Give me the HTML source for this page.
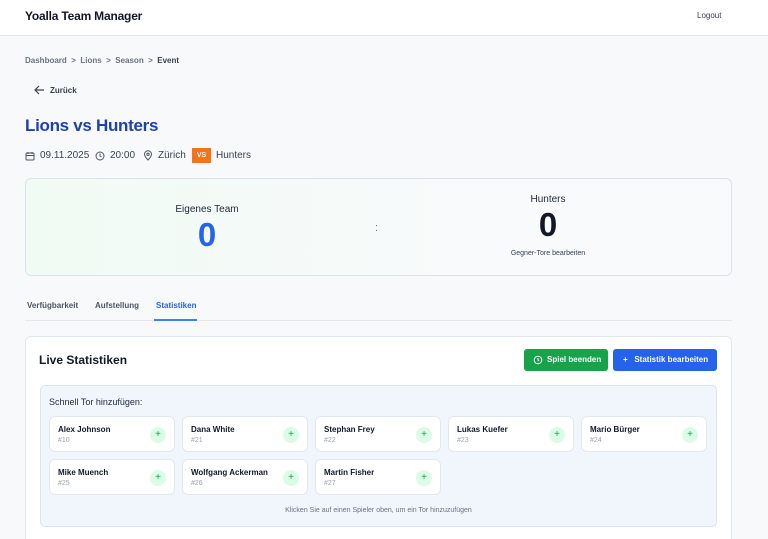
<!DOCTYPE html><html><head><style>
*{box-sizing:border-box;margin:0;padding:0}
html,body{width:768px;height:539px;overflow:hidden}
body{background:#f8f9fb;font-family:"Liberation Sans",sans-serif;color:#111827;position:relative}
.a{position:absolute}
.hdr{left:0;top:0;width:768px;height:36px;background:#fff;border-bottom:1px solid #e5e7eb}
.pc{background:#fff;border:1px solid #e2e8f0;border-radius:6px;width:126px;height:36px}
.pc b{position:absolute;left:8px;top:8px;font-size:8px}
.pc span{position:absolute;left:8px;top:20px;font-size:7px;color:#9ca3af}
.pc i{position:absolute;right:8px;top:10px;width:16px;height:16px;border-radius:50%;background:#dcfce7;color:#16a34a;font-style:normal;font-size:10px;text-align:center;line-height:16px}
</style></head><body>
<div class="a hdr"></div>
<div class="a" style="left:25px;top:9px;font-size:12px;font-weight:bold;letter-spacing:-0.2px">Yoalla Team Manager</div>
<div class="a" style="left:697px;top:11px;font-size:8px;color:#374151">Logout</div>
<div class="a" style="left:25px;top:56px;font-size:8px;color:#6b7280;font-weight:bold">Dashboard &nbsp;&gt;&nbsp; Lions &nbsp;&gt;&nbsp; Season &nbsp;&gt;&nbsp; <span style="color:#374151">Event</span></div>
<svg class="a" style="left:34px;top:85px" width="11" height="10" viewBox="0 0 11 10"><path d="M10 5H1M5 1L1 5l4 4" stroke="#374151" stroke-width="1.2" fill="none"/></svg>
<div class="a" style="left:50px;top:86px;font-size:8px;color:#374151;font-weight:bold">Zurück</div>
<div class="a" style="left:25px;top:116px;font-size:17px;font-weight:bold;color:#1e40af;letter-spacing:-0.3px">Lions vs Hunters</div>
<svg class="a" style="left:25px;top:151px" width="10" height="10" viewBox="0 0 10 10"><rect x="1" y="2" width="8" height="7" rx="1" stroke="#4b5563" fill="none"/><path d="M1 4.5h8M3 1v2M7 1v2" stroke="#4b5563"/></svg>
<div class="a" style="left:40px;top:150px;font-size:10px;color:#374151">09.11.2025</div>
<svg class="a" style="left:95px;top:151px" width="10" height="10" viewBox="0 0 10 10"><circle cx="5" cy="5" r="4" stroke="#4b5563" fill="none"/><path d="M5 2.5V5l1.5 1" stroke="#4b5563" fill="none"/></svg>
<div class="a" style="left:110px;top:150px;font-size:10px;color:#374151">20:00</div>
<svg class="a" style="left:143px;top:150px" width="10" height="11" viewBox="0 0 10 11"><path d="M5 10S1.5 6.5 1.5 4.3a3.5 3.5 0 017 0C8.5 6.5 5 10 5 10z" stroke="#4b5563" fill="none"/><circle cx="5" cy="4.3" r="1.2" stroke="#4b5563" fill="none"/></svg>
<div class="a" style="left:158px;top:150px;font-size:10px;color:#374151">Zürich</div>
<div class="a" style="left:192px;top:148px;width:19px;height:15px;background:#f97316;color:#fff;font-size:7px;font-weight:bold;text-align:center;line-height:15px">VS</div>
<div class="a" style="left:216px;top:150px;font-size:10px;color:#374151">Hunters</div>
<div class="a" style="left:25px;top:178px;width:707px;height:98px;border:1px solid #dbe3ea;border-radius:6px;background:linear-gradient(90deg,#f0fbf3,#f8fafb 60%,#f9fafb)"></div>
<div class="a" style="left:140px;top:204px;width:134px;text-align:center;font-size:10px;color:#1f2937">Eigenes Team</div>
<div class="a" style="left:140px;top:216px;width:134px;text-align:center;font-size:33px;font-weight:bold;color:#2563eb">0</div>
<div class="a" style="left:375px;top:222px;font-size:11px;color:#6b7280">:</div>
<div class="a" style="left:480px;top:194px;width:136px;text-align:center;font-size:10px;color:#1f2937">Hunters</div>
<div class="a" style="left:480px;top:206px;width:136px;text-align:center;font-size:33px;font-weight:bold;color:#111827">0</div>
<div class="a" style="left:480px;top:250px;width:136px;text-align:center;font-size:7px;color:#374151">Gegner-Tore bearbeiten</div>
<div class="a" style="left:25px;top:320px;width:707px;height:1px;background:#e5e7eb"></div>
<div class="a" style="left:27px;top:301px;font-size:8px;color:#4b5563;font-weight:bold">Verfügbarkeit</div>
<div class="a" style="left:95px;top:301px;font-size:8px;color:#4b5563;font-weight:bold">Aufstellung</div>
<div class="a" style="left:156px;top:301px;font-size:8px;color:#2563eb;font-weight:bold">Statistiken</div>
<div class="a" style="left:154px;top:319px;width:43px;height:2px;background:#3b82f6"></div>
<div class="a" style="left:25px;top:336px;width:707px;height:220px;background:#fff;border:1px solid #e2e8f0;border-radius:6px"></div>
<div class="a" style="left:39px;top:353px;font-size:12px;font-weight:bold">Live Statistiken</div>
<div class="a" style="left:524px;top:349px;width:84px;height:22px;background:#16a34a;border-radius:3px;color:#fff;font-size:8px;font-weight:bold;line-height:22px;padding-left:23px">Spiel beenden</div>
<svg class="a" style="left:533px;top:355px" width="10" height="10" viewBox="0 0 10 10"><circle cx="5" cy="5" r="3.8" stroke="#fff" fill="none"/><path d="M5 3v2l1 1" stroke="#fff" fill="none"/></svg>
<div class="a" style="left:613px;top:349px;width:104px;height:22px;background:#2563eb;border-radius:3px;color:#fff;font-size:8px;font-weight:bold;line-height:22px;padding-left:10px">+ &nbsp;&nbsp;Statistik bearbeiten</div>
<div class="a" style="left:40px;top:385px;width:677px;height:142px;background:#f1f6fd;border:1px solid #dbe5f1;border-radius:5px"></div>
<div class="a" style="left:49px;top:397px;font-size:9px;color:#1f2937">Schnell Tor hinzufügen:</div>
<div class="a pc" style="left:49px;top:416px"><b>Alex Johnson</b><span>#10</span><i>+</i></div>
<div class="a pc" style="left:182px;top:416px"><b>Dana White</b><span>#21</span><i>+</i></div>
<div class="a pc" style="left:315px;top:416px"><b>Stephan Frey</b><span>#22</span><i>+</i></div>
<div class="a pc" style="left:448px;top:416px"><b>Lukas Kuefer</b><span>#23</span><i>+</i></div>
<div class="a pc" style="left:581px;top:416px"><b>Mario Bürger</b><span>#24</span><i>+</i></div>
<div class="a pc" style="left:49px;top:459px"><b>Mike Muench</b><span>#25</span><i>+</i></div>
<div class="a pc" style="left:182px;top:459px"><b>Wolfgang Ackerman</b><span>#26</span><i>+</i></div>
<div class="a pc" style="left:315px;top:459px"><b>Martin Fisher</b><span>#27</span><i>+</i></div>
<div class="a" style="left:40px;top:507px;width:677px;text-align:center;font-size:7px;color:#6b7280">Klicken Sie auf einen Spieler oben, um ein Tor hinzuzufügen</div>
</body></html>
